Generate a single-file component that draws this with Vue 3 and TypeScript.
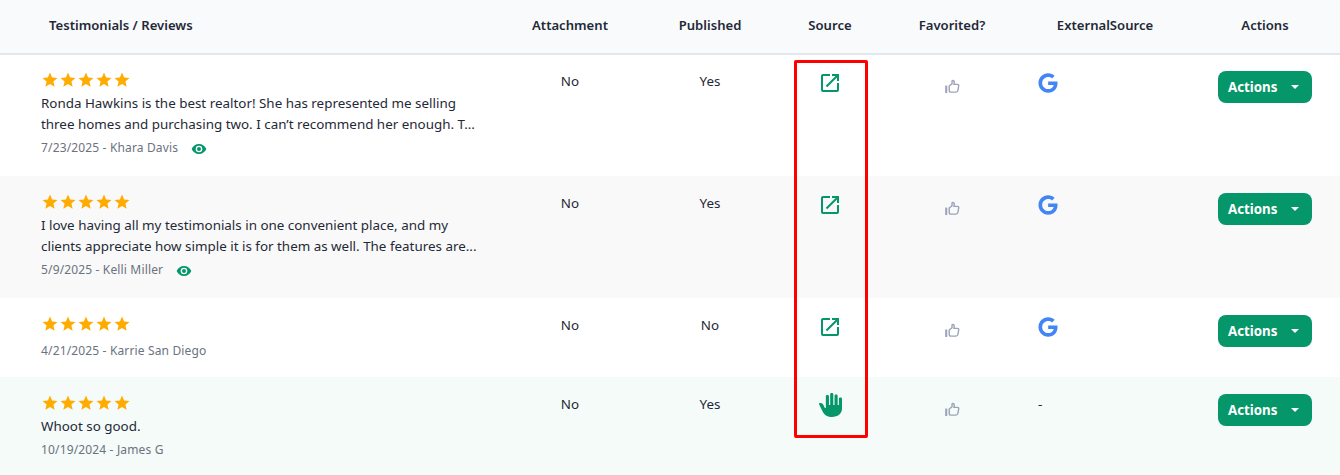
<script setup lang="ts">
interface Review {
  date: string
  author: string
  text?: string
  eye?: boolean
  published: string
  manual?: boolean
  tone?: string
}

const reviews: Review[] = [
  {
    date: '7/23/2025',
    author: 'Khara Davis',
    text: 'Ronda Hawkins is the best realtor! She has represented me selling three homes and purchasing two. I can’t recommend her enough. T...',
    eye: true,
    published: 'Yes',
  },
  {
    date: '5/9/2025',
    author: 'Kelli Miller',
    text: 'I love having all my testimonials in one convenient place, and my clients appreciate how simple it is for them as well. The features are...',
    eye: true,
    published: 'Yes',
    tone: 'gray',
  },
  { date: '4/21/2025', author: 'Karrie San Diego', published: 'No' },
  { date: '10/19/2024', author: 'James G', text: 'Whoot so good.', published: 'Yes', manual: true, tone: 'mint' },
]

const heads = ['Testimonials / Reviews', 'Attachment', 'Published', 'Source', 'Favorited?', 'ExternalSource', 'Actions']
const star = 'M12,17.27L18.18,21L16.54,13.97L22,9.24L14.81,8.62L12,2L9.19,8.62L2,9.24L7.45,13.97L5.82,21L12,17.27Z'
</script>

<template>
  <div class="page">
    <div class="row head">
      <div v-for="h in heads" :key="h" class="th">{{ h }}</div>
    </div>
    <div v-for="r in reviews" :key="r.date" class="row body" :class="r.tone">
      <div class="main" :class="{ bare: !r.text }">
        <div class="stars">
          <svg v-for="n in 5" :key="n" viewBox="0 0 24 24" class="star"><path :d="star" /></svg>
        </div>
        <p v-if="r.text" class="text">{{ r.text }}</p>
        <div class="meta" :class="{ tall: r.eye }">
          <span>{{ r.date }} - {{ r.author }}</span>
          <svg v-if="r.eye" viewBox="0 0 24 24" class="eye"><path d="M12,9A3,3 0 0,0 9,12A3,3 0 0,0 12,15A3,3 0 0,0 15,12A3,3 0 0,0 12,9M12,17A5,5 0 0,1 7,12A5,5 0 0,1 12,7A5,5 0 0,1 17,12A5,5 0 0,1 12,17M12,4.5C7,4.5 2.73,7.61 1,12C2.73,16.39 7,19.5 12,19.5C17,19.5 21.27,16.39 23,12C21.27,7.61 17,4.5 12,4.5Z" /></svg>
        </div>
      </div>
      <div class="cell">No</div>
      <div class="cell">{{ r.published }}</div>
      <div class="cell icon">
        <svg v-if="r.manual" viewBox="2.5 0 18.5 24" preserveAspectRatio="none" class="src hand"><path d="M13 24C9.74 24 6.81 22 5.6 19L2.57 11.37C2.26 10.58 3 9.79 3.81 10.05L4.6 10.31C5.16 10.5 5.62 10.92 5.84 11.47L7.25 15H8V3.25C8 2.56 8.56 2 9.25 2S10.5 2.56 10.5 3.25V12H11.5V1.25C11.5 .56 12.06 0 12.75 0S14 .56 14 1.25V12H15V2.75C15 2.06 15.56 1.5 16.25 1.5C16.94 1.5 17.5 2.06 17.5 2.75V12H18.5V5.75C18.5 5.06 19.06 4.5 19.75 4.5S21 5.06 21 5.75V16C21 20.42 17.42 24 13 24Z" /></svg>
        <svg v-else viewBox="0 0 24 24" class="src"><path d="M14,3V5H17.59L7.76,14.83L9.17,16.24L19,6.41V10H21V3M19,19H5V5H12V3H5C3.89,3 3,3.9 3,5V19A2,2 0 0,0 5,21H19A2,2 0 0,0 21,19V12H19V19Z" /></svg>
      </div>
      <div class="cell icon">
        <svg viewBox="0 0 16 16" class="thumb" fill="none" stroke="#9ca3b8" stroke-width="1.5">
          <path d="M1.3 7v8" stroke-width="2.2" />
          <path d="M4.5 7.5 7.5 5V2.2c0-.7 1.9-.9 2.3.5.2.9-.1 2.3-.4 3h3.8c1 0 1.6.7 1.4 1.7l-.8 4.6c-.2 1.2-1 2-2.2 2H6.5c-1.2 0-2-.6-2-1.6z" stroke-linejoin="round" />
        </svg>
      </div>
      <div class="cell ext">
        <svg v-if="!r.manual" viewBox="0 0 488 512" class="google"><path d="M488 261.8C488 403.3 391.1 504 248 504 110.8 504 0 393.2 0 256S110.8 8 248 8c66.8 0 123 24.5 166.3 64.9l-67.5 64.9C258.5 52.6 94.3 116.6 94.3 256c0 86.5 69.1 156.6 153.7 156.6 98.2 0 135-70.4 140.8-106.9H248v-85.3h236.1c2.3 12.7 3.9 24.9 3.9 41.4z" /></svg>
        <span v-else>-</span>
      </div>
      <div class="cell act">
        <button class="btn" type="button">Actions<i class="caret"></i></button>
      </div>
    </div>
    <div class="mark"></div>
  </div>
</template>

<style>
html, body { margin: 0; background: #fff; }
</style>

<style scoped>
.page {
  position: relative;
  width: 1340px;
  height: 475px;
  overflow: hidden;
  font-family: "Noto Sans", sans-serif;
  font-size: 13.4px;
  color: #1f2937;
}
.row {
  display: grid;
  grid-template-columns: 500px 140px 140px 100px 144px 166px 150px;
}
.head {
  height: 54px;
  box-sizing: border-box;
  background: #f9fafb;
  align-items: center;
  padding-bottom: 3px;
  border-bottom: 1px solid #e2e8f0;
}
.th { font-weight: 600; font-size: 13.1px; text-align: center; }
.th:first-child { text-align: left; padding-left: 49px; }
.th:nth-child(6) { padding-right: 4px; }
.head + .body { box-shadow: inset 0 1px 0 #e2e8f0; }
.gray { background: #f9f9f9; }
.mint { background: #f4fbf9; }
.main { padding: 17px 15px 16px 41px; min-width: 0; }
.stars { display: flex; height: 18px; }
.star { width: 18px; height: 18px; fill: #ffab00; }
.text {
  margin: 4px 0 0;
  line-height: 21px;
}
.meta {
  margin-top: 3px;
  line-height: 20px;
  font-size: 12px;
  letter-spacing: 0.15px;
  color: #6b7280;
  display: flex;
  gap: 13px;
  align-items: flex-start;
}
.bare .meta { margin-top: 8px; }
.tall { height: 22px; }
.eye { width: 16px; height: 16px; fill: #059669; margin-top: 3px; }
.cell { padding-top: 17px; line-height: 21px; text-align: center; }
.icon { display: flex; justify-content: center; align-items: flex-start; padding-top: 16px; }
.src { width: 24px; height: 24px; fill: #059669; margin-top: 1px; }
.hand { width: 23px; margin-top: 0; }
.thumb { width: 15px; height: 15px; margin-top: 9px; }
.ext { text-align: left; padding-left: 14px; padding-top: 16px; }
.google { display: block; width: 20px; height: 20px; fill: #4285f4; margin-top: 3px; }
.ext span { display: block; margin-top: 1px; }
.act { display: flex; justify-content: center; align-items: flex-start; padding-top: 17px; }
.btn {
  width: 94px;
  height: 32px;
  border: 0;
  border-radius: 8px;
  background: #059669;
  color: #fff;
  font: 700 13.3px "Noto Sans", sans-serif;
  display: flex;
  align-items: center;
  justify-content: space-between;
  padding: 0 13px 0 10px;
}
.caret {
  width: 0;
  height: 0;
  border-left: 4px solid transparent;
  border-right: 4px solid transparent;
  border-top: 4px solid #fff;
}
.mark {
  position: absolute;
  left: 794px;
  top: 60px;
  width: 74px;
  height: 378px;
  box-sizing: border-box;
  border: 3px solid #ff0000;
  border-radius: 2px;
}
</style>
